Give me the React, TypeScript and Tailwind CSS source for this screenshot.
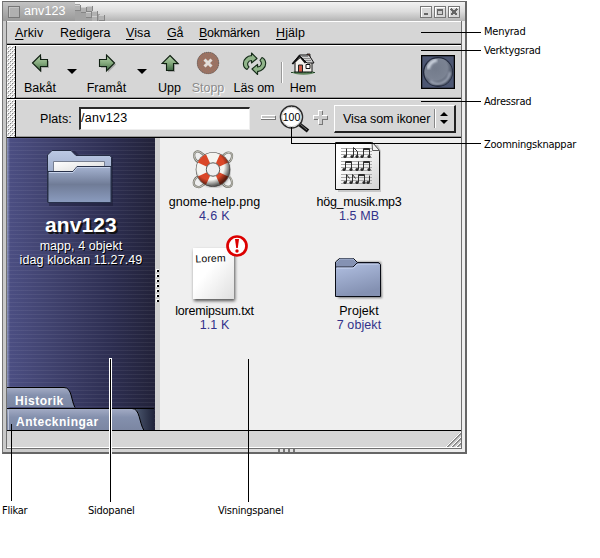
import React from "react";

const UI = "font-['Liberation_Sans',Arial,sans-serif] text-[12.5px] leading-[14px] whitespace-nowrap";
const NOTE = "absolute font-['DejaVu_Sans_Condensed','DejaVu_Sans',sans-serif] text-[11px] leading-[13px] tracking-[-.25px] whitespace-nowrap text-black";

function Grip({ height }: { height: number }) {
  return (
    <svg width="9" height={height} className="shrink-0" shapeRendering="crispEdges">
      <defs>
        <pattern id={`grip${height}`} width="4" height="4" patternUnits="userSpaceOnUse">
          <rect width="4" height="4" fill="#d6d6d6" />
          <path d="M0 0h2v2h-2zM2 2h2v2h-2z" fill="#fff" />
          <path d="M1 1h1v1h-1zM3 3h1v1h-1z" fill="#808080" />
        </pattern>
      </defs>
      <rect width="8" height={height} fill={`url(#grip${height})`} />
      <rect x="8" width="1" height={height} fill="#000" />
    </svg>
  );
}

function Arrow({ kind }: { kind: "left" | "right" | "up" }) {
  const turn = kind === "right" ? "translate(18 0) scale(-1 1)" : kind === "up" ? "translate(18 0) rotate(90)" : undefined;
  return (
    <svg width="20" height="20" viewBox="0 0 20 20" className="relative left-px">
      <defs>
        <linearGradient id={`arrow-${kind}`} x1="0" y1="0" x2={kind === "up" ? "1" : "0"} y2={kind === "up" ? "0" : "1"}>
          <stop offset="0" stopColor="#b7d3ae" />
          <stop offset="0.5" stopColor="#86ab7e" />
          <stop offset="1" stopColor="#3e6743" />
        </linearGradient>
      </defs>
      <g transform="translate(1.5 1.5)" opacity=".22">
        <path transform={turn} d="M1.500 9 9.500 1v4.500h7v7h-7V17z" />
      </g>
      <path transform={turn} d="M1.500 9 9.500 1v4.500h7v7h-7V17z" fill={`url(#arrow-${kind})`} stroke="#102012" strokeWidth="1.1" />
    </svg>
  );
}

function StopIcon() {
  return (
    <svg width="24" height="25" viewBox="0 0 24 25">
      <defs>
        <pattern id="dither" width="2" height="2" patternUnits="userSpaceOnUse">
          <rect width="2" height="2" fill="#b9694c" />
          <path d="M0 0h1v1h-1zM1 1h1v1h-1z" fill="#7c7c7a" />
        </pattern>
      </defs>
      <circle cx="12" cy="12" r="11" fill="#9b7363" />
      <circle cx="12" cy="12" r="10.7" fill="url(#dither)" fillOpacity=".7" stroke="#626262" strokeDasharray="1 1" />
      <path d="m8.500 8.500 7 7M15.500 8.500l-7 7" stroke="#e4deda" strokeWidth="3" />
    </svg>
  );
}

function ReloadIcon() {
  return (
    <svg width="25" height="24" viewBox="0 0 25 24" fill="#91b58a" stroke="#152b19" strokeWidth="1.1" strokeLinejoin="round">
      <path d="M5 17.500C.5 15.500.3 9 4 6 6 4.200 8 3.500 9.500 3.800V1l5.500 5.500-5.500 4.500V8.500c-3.800.2-5 4-2.500 6.500z" />
      <path d="M20 5.500c4.600 2 4.800 8.500 1.100 11.500-2 1.800-3.900 2.500-5.500 2.300V22.500L10 17l5.600-4.700v2.700c3.700-.2 5-4 2.400-6.700z" />
    </svg>
  );
}

function HomeIcon() {
  return (
    <svg width="24" height="24" viewBox="0 0 24 24">
      <ellipse cx="12.5" cy="20.5" rx="11" ry="2.2" fill="#5b8159" />
      <path d="M4 10.5 9 5l9 0 3 6v9H4z" fill="#f4f1ec" stroke="#111" />
      <path d="M16 2h3v7h-3z" fill="#c76a55" stroke="#111" strokeWidth=".8" />
      <path d="M1 12 8.5 3H18l5 8h-7L10 5z" fill="#d1d1d1" stroke="#111" />
      <path d="m1.5 12 7-8 6 7" fill="none" stroke="#111" strokeWidth="1.7" />
      <path d="M11 4.5h6M12 6.5h7M14 8.5h6" stroke="#777" strokeWidth=".8" />
      <path d="M7.5 13h4v7h-4z" fill="#d15b46" stroke="#222" />
      <path d="M15 12.5h4v4h-4z" fill="#fff" stroke="#111" />
      <path d="M0 20.5h7m6 0h11" stroke="#24442a" strokeWidth="1.2" strokeDasharray="2 1" />
    </svg>
  );
}

function Tool({ w, label, children, disabled }: { w: string; label: string; children: React.ReactNode; disabled?: boolean }) {
  return (
    <div className={`${w} flex flex-col items-center`}>
      <div className="mt-[5px] flex h-[29px] items-center justify-center pb-[4px]">{children}</div>
      <span className={`${UI} mt-px ${disabled ? "text-[#8b8b8b] [text-shadow:1px_1px_0_#fff]" : "text-black"}`}>{label}</span>
    </div>
  );
}

function Down({ w }: { w: string }) {
  return (
    <div className={`${w} flex justify-center pt-[23px]`}>
      <svg width="10" height="5"><path d="M0 0h10L5 5z" /></svg>
    </div>
  );
}

function LargeFolder() {
  return (
    <svg width="72" height="60" viewBox="0 0 72 60" className="overflow-visible">
      <defs>
        <linearGradient id="bf" x1="0" y1="0" x2="0" y2="1">
          <stop offset="0" stopColor="#bcc9e4" /><stop offset="1" stopColor="#7787a9" />
        </linearGradient>
        <linearGradient id="bfr" x1="0" y1="0" x2="0" y2="1">
          <stop offset="0" stopColor="#a5b3d1" /><stop offset=".5" stopColor="#707c97" /><stop offset="1" stopColor="#8b9cbf" />
        </linearGradient>
        <linearGradient id="paper" x1="0" y1="0" x2="1" y2="1">
          <stop offset="0" stopColor="#fff" /><stop offset="1" stopColor="#d7d7d7" />
        </linearGradient>
      </defs>
      <path d="M4 9 9 3h21l6 6h32v49H4z" fill="#101026" opacity=".35" />
      <path d="M2.500 53V7L7 2.500h19L31 7.500h34l1.500 2V54h-64z" fill="url(#bf)" stroke="#252c43" />
      <path d="M8.500 13.500h51V25h-51z" fill="url(#paper)" stroke="#777f91" />
      <path d="M3 23.500h25L32 18.500h34V54.500H3z" fill="url(#bfr)" stroke="#28314a" />
      <path d="M4 24.500h24L32 19.500h33" fill="none" stroke="#c6d2ea" />
    </svg>
  );
}

function HelpIcon() {
  const ropes = "M9 15C-1 10 1 0 8 3l8 6M30 8c4-6 11-6 10 0s-5 5-7 7M9 26c-9 3-10 13-1 12l8-5M30 33c3 7 11 6 10 0s-4-6-7-8";
  return (
    <svg width="44" height="42" viewBox="0 0 44 42" className="relative -left-px">
      <defs>
        <filter id="ringblur" x="-20%" y="-20%" width="140%" height="140%"><feGaussianBlur stdDeviation="1.300" /></filter>
        <radialGradient id="ringshade" cx=".42" cy=".4" r=".58"><stop offset=".7" stopColor="#000" stopOpacity="0" /><stop offset="1" stopColor="#000" stopOpacity=".6" /></radialGradient>
      </defs>
      <circle cx="22" cy="22" r="12" fill="none" stroke="#000" strokeWidth="9" opacity=".3" filter="url(#ringblur)" />
      <path d={ropes} fill="none" stroke="#75756d" strokeWidth="2.200" />
      <path d={ropes} fill="none" stroke="#d5d4cb" strokeWidth=".9" />
      <circle cx="21" cy="20.500" r="17.300" fill="#4d4b48" />
      <circle cx="21" cy="20.500" r="11.700" fill="none" stroke="#f4f4f0" strokeWidth="10" />
      <circle cx="21" cy="20.500" r="11.700" fill="none" stroke="#da4728" strokeWidth="10" pathLength="80" strokeDasharray="9 11" strokeDashoffset="-5.500" />
      <circle cx="21" cy="20.500" r="17" fill="url(#ringshade)" />
      <circle cx="21" cy="20.500" r="6.700" fill="#efefef" stroke="#62625e" />
    </svg>
  );
}

function MusicIcon() {
  const line = "M0 0h31M0 3h31M0 6h31M0 9h31";
  const pair = "M0.500 9V1h6v8M0 2h7";
  return (
    <svg width="50" height="52" viewBox="0 0 50 52" className="relative -left-px">
      <defs><linearGradient id="sheet" x1="0" y1="0" x2="1" y2="1"><stop offset=".3" stopColor="#fff" /><stop offset="1" stopColor="#d2d2d2" /></linearGradient></defs>
      <path d="M4 4h41l3 6v41H5z" opacity=".16" />
      <path d="M2.500 1.500h37l7 9v38h-44z" fill="url(#sheet)" stroke="#111" />
      <path d="m39 1 .5 8.500h7z" fill="#f5f5f5" stroke="#555" />
      {[7.5, 20.5, 33.5].map((y, i) => (
        <g key={y} transform={`translate(8 ${y})`}>
          <path d={line} stroke="#aaa" strokeWidth="1" />
          <g fill="none" stroke="#2e2e2e" strokeWidth="1">
            {i === 0 && <><path d="M5.500 8V0M12.500 8V-1l4 4v5" /><path transform="translate(22 -1)" d={pair} /></>}
            {i === 1 && <><path transform="translate(4 -1)" d={pair} /><path d="M17.500 8V0" /><path transform="translate(22 -1)" d={pair} /></>}
            {i === 2 && <><path d="M5.500 8V0l3 4M11.500 8V0l3 4M28.500 8V1" /><path transform="translate(17 -1)" d={pair} /></>}
          </g>
          {(i === 0 ? [4, 11, 16, 21, 28] : i === 1 ? [3, 10, 16, 21, 28] : [4, 10, 16, 23, 27]).map((x) => <circle key={x} cx={x} cy="8" r="1.600" fill="#2a2a2a" />)}
        </g>
      ))}
    </svg>
  );
}

function TextIcon() {
  return (
    <div className="relative -left-px h-[64px] w-[64px]">
      <div className="absolute left-[11px] top-[13px] flex h-[51px] w-[41px] bg-linear-to-br from-white from-40% to-[#dfdfdf] pl-[3px] shadow-[1px_2px_3px_rgba(0,0,0,.65)]">
        <span className="mt-[3px] -rotate-2 font-['Liberation_Sans'] text-[10.5px] leading-[14px] tracking-[.1px] text-black">Lorem</span>
      </div>
      <svg width="22" height="22" className="absolute left-[44px] top-0">
        <circle cx="11" cy="11" r="9.500" fill="#fff" stroke="#dc0000" strokeWidth="2.700" />
        <path d="M9 4h4l-1.200 9h-1.600z" fill="#dc0000" /><circle cx="11" cy="16" r="1.700" fill="#dc0000" />
      </svg>
    </div>
  );
}

function SmallFolder() {
  return (
    <svg width="54" height="46" viewBox="0 0 54 46" className="relative left-px">
      <defs>
        <linearGradient id="sf" x1="0" y1="0" x2=".3" y2="1"><stop offset="0" stopColor="#b7c6e8" /><stop offset="1" stopColor="#8491b2" /></linearGradient>
        <filter id="soft" x="-10%" y="-10%" width="130%" height="130%"><feGaussianBlur stdDeviation="1.300" /></filter>
      </defs>
      <path d="M4 5h44l1 36H5z" opacity=".5" filter="url(#soft)" />
      <path d="M2.500 39.500V5l4-3.500h14l4 4h21l2 2v32z" fill="url(#sf)" stroke="#080b14" />
      <path d="M3 6 7 2h13l4 3.500-4 4H3z" fill="#8592b3" />
      <path d="M3 10h17l4-4h22" fill="none" stroke="#10131e" />
      <path d="M3.500 11h17l4-4h21" fill="none" stroke="#cbd7f4" />
      <path d="m4 5 3-3h13l2 2" fill="none" stroke="#a4b4d4" />
    </svg>
  );
}

function FileItem({ icon, name, meta, nameTrack, metaTrack, className }: { icon: React.ReactNode; name: string; meta: string; nameTrack: string; metaTrack: string; className: string }) {
  return (
    <div className={`flex flex-col items-center ${className}`}>
      {icon}
      <span className={`${UI} ${nameTrack}`}>{name}</span>
      <span className={`${UI} ${metaTrack} text-[#32328a]`}>{meta}</span>
    </div>
  );
}

function TitleBar() {
  return (
    <header className="flex h-[19px] shrink-0 items-center bg-linear-to-b from-[#f2f2f2] via-[#dddddd] to-[#b4b4b4]">
      <div className="flex h-full w-[72px] items-center bg-linear-to-b from-[#c3c3c3] to-[#999999] pl-[5px]">
        <i className="h-3 w-3 border border-[#777] bg-[#b0b0b0] shadow-[inset_1px_1px_#c4c4c4]" />
        <span className={`${UI} relative -top-px ml-[4px] tracking-[.1px] text-white`}>anv123</span>
      </div>
      <svg width="34" height="19" shapeRendering="crispEdges">
        <path d="M0 0v19h30v-3h-5v-4h-7V7H5V2H0z" fill="#a3a3a3" />
        {[[0, 3], [6, 5], [12, 4], [11, 10], [17, 9], [17, 14], [24, 13]].map(([x, y]) => (
          <g key={`${x}-${y}`}><path d={`M${x} ${y}h6v6h-6z`} fill="#858585" /><path d={`M${x} ${y}h5v5h-5z`} fill="#b2b2b2" /><path d={`M${x} ${y}h5v1h-5z`} fill="#cfcfcf" /></g>
        ))}
      </svg>
      <div className="mr-[5px] ml-auto flex gap-[2px]">
        {[0, 1, 2].map((n) => (
          <svg key={n} width="12" height="12" shapeRendering="crispEdges">
            <path d="M.5 .5h11v11H.5z" fill="#d8d8d8" stroke="#777" /><path d="M1 1h10v1H2v9H1z" fill="#fff" />
            {n === 0 && <path d="M4 7h4v2H4z" fill="#666" />}
            {n === 1 && <><path d="M3.500 3.500h5v5h-5z" fill="#ccc" stroke="#666" /><path d="M3 3h6v2H3z" fill="#666" /></>}
            {n === 2 && <path d="m3 3 6 6M9 3 3 9" stroke="#666" strokeWidth="2" />}
          </svg>
        ))}
      </div>
    </header>
  );
}

function Menu({ first, letter, rest, w, track = "tracking-[.1px]" }: { first?: string; letter: string; rest: string; w: string; track?: string }) {
  return <span className={`${UI} ${w} ${track} shrink-0`}>{first}<u className="underline-offset-2">{letter}</u>{rest}</span>;
}

function MenuBar() {
  return (
    <nav className="flex h-[24px] shrink-0 items-start border-t border-b border-t-white border-b-black bg-[#d6d6d6] pt-[4px] pl-[8px] shadow-[inset_0_-1px_#999]">
      <Menu letter="A" rest="rkiv" w="w-[45px]" />
      <Menu first="R" letter="e" rest="digera" w="w-[66px]" track="tracking-[-.05px]" />
      <Menu letter="V" rest="isa" w="w-[41px]" />
      <Menu letter="G" rest="å" w="w-[32px]" track="tracking-[-.2px]" />
      <Menu letter="B" rest="okmärken" w="w-[77px]" track="tracking-[-.3px]" />
      <Menu letter="H" rest="jälp" w="w-[40px]" />
    </nav>
  );
}

function Toolbar() {
  return (
    <div className="flex h-[54px] shrink-0 border-t border-b border-t-white border-b-black bg-[#d6d6d6] shadow-[inset_0_-1px_#999]">
      <Grip height={52} />
      <Tool w="w-[48px]" label="Bakåt"><Arrow kind="left" /></Tool>
      <Down w="w-[15px]" />
      <Tool w="w-[55px]" label="Framåt"><Arrow kind="right" /></Tool>
      <Down w="w-[16px]" />
      <Tool w="w-[39px]" label="Upp"><Arrow kind="up" /></Tool>
      <Tool w="w-[38px]" label="Stopp" disabled><StopIcon /></Tool>
      <Tool w="w-[54px]" label="Läs om"><ReloadIcon /></Tool>
      <i className="mt-[16px] h-[21px] w-[2px] border-l border-[#999] bg-white" />
      <Tool w="w-[40px]" label="Hem"><HomeIcon /></Tool>
      <svg width="34" height="34" className="mt-[9px] mr-[6px] ml-auto">
        <defs>
          <radialGradient id="lens" cx=".4" cy=".35" r=".65"><stop offset="0" stopColor="#737b8b" /><stop offset=".65" stopColor="#7b8393" /><stop offset="1" stopColor="#3a4255" /></radialGradient>
          <filter id="glint"><feGaussianBlur stdDeviation="1.200" /></filter>
        </defs>
        <path d="M.5 .5h33v33H.5z" fill="#4c5672" stroke="#000" strokeWidth="1.500" />
        <circle cx="17" cy="17" r="15" fill="#20273a" /><circle cx="17.300" cy="17.300" r="14" fill="url(#lens)" />
        <path d="M7 14C8 9 11 6 16 5" fill="none" stroke="#d0d7e2" strokeWidth="3" filter="url(#glint)" />
        <path d="M9 26C16 32 28 28 29 17" fill="none" stroke="#b2bac9" strokeWidth="2" filter="url(#glint)" />
      </svg>
    </div>
  );
}

function LocationBar() {
  return (
    <div className="flex h-[39px] shrink-0 border-t border-b border-t-white border-b-black bg-[#d6d6d6] shadow-[inset_0_-1px_#999]">
      <Grip height={37} />
      <span className={`${UI} mt-[12px] ml-[24px] w-[39px] shrink-0 tracking-[.1px]`}>Plats:</span>
      <div className="mt-[7px] h-[23px] w-[171px] shrink-0 border-t-2 border-r border-b border-l-2 border-t-[#292929] border-r-[#eee] border-b-[#eee] border-l-[#292929] bg-white pt-[2px]">
        <span className={`${UI} block tracking-[.3px]`}>/anv123</span>
      </div>
      <svg width="78" height="34" className="ml-[6px] shrink-0">
        <path d="M5 16h15v4H5z" fill="#777" /><path d="M5 15h14v4H5z" fill="#fff" /><path d="M6 16h13v2H6z" fill="#c2c2c2" />
        <path d="m43 24 9 7" stroke="#111" strokeWidth="4" /><path d="m44 24 7 6" stroke="#777" />
        <circle cx="35.500" cy="17" r="11" fill="#fff" stroke="#2b2b2b" strokeWidth="1.500" /><circle cx="35.500" cy="17" r="9.700" fill="none" stroke="#c7c7c7" />
        <text x="35.500" y="21" textAnchor="middle" fontFamily="Liberation Sans" fontSize="10.500">100</text>
        <path d="M62 11h4v5h5v4h-5v5h-4v-5h-5v-4h5z" transform="translate(1 0)" fill="#777" />
        <path d="M62 10h4v5h5v4h-5v5h-4v-5h-5v-4h5z" fill="#fff" />
        <path d="M63 11h3v5h5v3h-5v5h-3v-5h-5v-3h5z" fill="#cacaca" />
      </svg>
      <div className="mt-[5px] mr-[6px] ml-auto flex h-[28px] w-[122px] shrink-0 border-t border-r-2 border-b-2 border-l border-t-white border-r-[#222] border-b-[#222] border-l-white bg-[#d6d6d6]">
        <span className={`${UI} mt-[6px] ml-[8px] w-[91px] shrink-0 tracking-[-.1px]`}>Visa som ikoner</span>
        <i className="mt-[3px] h-[19px] w-[2px] shrink-0 border-l border-[#888] bg-white" />
        <svg width="16" height="20" className="mt-[2px]"><path d="m4 8 4-4 4 4zM4 12l4 4 4-4z" /></svg>
      </div>
    </div>
  );
}

function SidePanel() {
  return (
    <aside className="relative flex w-[148px] shrink-0 flex-col bg-[repeating-linear-gradient(180deg,rgba(255,255,255,.06)_0px,rgba(255,255,255,.06)_1px,transparent_1px,transparent_4px),linear-gradient(90deg,#8f97be_0px,#4b4e82_3px,#414370_40px,#2d2e51_105px,#222239_148px)] text-white">
      <div className="mt-[10px] ml-[38px] h-[62px]"><LargeFolder /></div>
      <strong className="block h-[29px] pt-[3px] text-center font-['Liberation_Sans'] text-[21px] leading-[24px] tracking-[.1px] whitespace-nowrap [text-shadow:2px_2px_#111]">anv123</strong>
      <span className={`${UI} text-center tracking-[.05px] [text-shadow:1px_1px_#000]`}>mapp, 4 objekt</span>
      <span className={`${UI} text-center tracking-[.1px] [text-shadow:1px_1px_#000]`}>idag klockan 11.27.49</span>
      <div className="relative mt-auto h-[44px]">
        <svg width="148" height="44" className="absolute inset-0">
          <defs>
            <linearGradient id="tab" x1="0" y1="0" x2="0" y2="1"><stop offset="0" stopColor="#a4acc5" /><stop offset=".4" stopColor="#8490ad" /><stop offset="1" stopColor="#7b86a2" /></linearGradient>
            <linearGradient id="tabend"><stop offset=".85" stopColor="#536078" /><stop offset="1" stopColor="#20243a" /></linearGradient>
          </defs>
          <path d="M0 21V1.500h57c8 0 7 13 11 20z" fill="url(#tab)" />
          <path d="M0 1.500h57c8 0 7 13 11 20" fill="none" stroke="#000" />
          <path d="M1 22h146v22H1z" fill="url(#tabend)" />
          <path d="M0 44V22.500h125c8 0 7 14 12 22" fill="url(#tab)" />
          <path d="M125 22.500c8 0 7 14 12 22" fill="none" stroke="#000" />
          <path d="M0 22.500h147" stroke="#000" /><path d="M1.500 24v20" stroke="#bdc4d8" />
        </svg>
        <b className="relative block h-[22px] pt-[9px] pl-[8px] font-['Liberation_Sans'] text-[12px] leading-[13px] tracking-[.5px]">Historik</b>
        <b className="relative block pt-[8px] pl-[9px] font-['Liberation_Sans'] text-[12px] leading-[13px] tracking-[.5px]">Anteckningar</b>
      </div>
    </aside>
  );
}

function Notes() {
  return (
    <>
      <svg width="600" height="558" className="pointer-events-none absolute inset-0" shapeRendering="crispEdges" fill="none">
        <path d="M110.500 358v96" stroke="#fff" strokeWidth="3" />
        <path d="M421 32.500h60M421 50.500h60M421 101.500h60M291.500 127v16.500H481M11.500 424v77M110.500 359v143M248.500 359v143" stroke="#000" />
      </svg>
      <span className={`${NOTE} left-[484px] top-[25px]`}>Menyrad</span>
      <span className={`${NOTE} left-[484px] top-[44px]`}>Verktygsrad</span>
      <span className={`${NOTE} left-[484px] top-[95px]`}>Adressrad</span>
      <span className={`${NOTE} left-[484px] top-[138px]`}>Zoomningsknappar</span>
      <span className={`${NOTE} left-[2px] top-[504px]`}>Flikar</span>
      <span className={`${NOTE} left-[88px] top-[504px]`}>Sidopanel</span>
      <span className={`${NOTE} left-[218px] top-[504px]`}>Visningspanel</span>
    </>
  );
}

export default function App() {
  return (
    <div className="relative h-[558px] w-[600px] overflow-hidden bg-white pt-px pl-[2px] text-black">
      <main className="flex h-[453px] w-[465px] flex-col border-t border-r-2 border-b-2 border-l border-t-[#6b6b6b] border-r-[#666] border-b-[#666] border-l-[#777] bg-linear-to-r from-[#c9c9c9] to-[#eeeeee]">
        <TitleBar />
        <div className="mr-[3px] ml-[3px] flex h-[428px] flex-col border-r border-l border-[#707070]">
          <MenuBar />
          <Toolbar />
          <LocationBar />
          <div className="flex h-[292px] shrink-0">
            <SidePanel />
            <svg width="5" height="292" className="shrink-0 bg-[#d0d0d0]" shapeRendering="crispEdges">
              {[132, 137, 142, 147, 152, 157, 162].map((y) => <g key={y}><path d={`M1 ${y - 1}h3v3H1z`} fill="#fff" /><path d={`M2 ${y}h2v2H2z`} fill="#000" /></g>)}
            </svg>
            <section className="grid flex-1 grid-cols-[109px_180px] grid-rows-[97px_195px] bg-[#efefef]">
              <FileItem className="pt-[11px]" icon={<div className="h-[46px]"><HelpIcon /></div>} name="gnome-help.png" meta="4.6 K" nameTrack="tracking-[.1px]" metaTrack="tracking-[.35px]" />
              <FileItem className="pt-[3px]" icon={<div className="h-[54px]"><MusicIcon /></div>} name="hög_musik.mp3" meta="1.5 MB" nameTrack="tracking-[-.25px]" metaTrack="tracking-[.1px]" />
              <FileItem className="" icon={<div className="h-[69px]"><TextIcon /></div>} name="loremipsum.txt" meta="1.1 K" nameTrack="tracking-[-.2px]" metaTrack="tracking-[.1px]" />
              <FileItem className="pt-[22px]" icon={<div className="h-[47px]"><SmallFolder /></div>} name="Projekt" meta="7 objekt" nameTrack="tracking-[.1px]" metaTrack="tracking-[.1px]" />
            </section>
          </div>
          <footer className="flex h-[18px] shrink-0 justify-end border-t border-b border-t-black border-b-white bg-[#d6d6d6]">
            <svg width="16" height="16"><path d="M2 16 16 2M7 16l9-9M12 16l4-4" stroke="#888" strokeWidth="2" /><path d="M1 16 16 1M6 16 16 6M11 16l5-5" stroke="#fff" /></svg>
          </footer>
          <i className="h-px bg-[#707070]" />
        </div>
        <svg width="20" height="3" className="ml-[275px]"><path d="M1 0v3M6 0v3M11 0v3M16 0v3" stroke="#777" strokeWidth="2" /></svg>
      </main>
      <Notes />
    </div>
  );
}
